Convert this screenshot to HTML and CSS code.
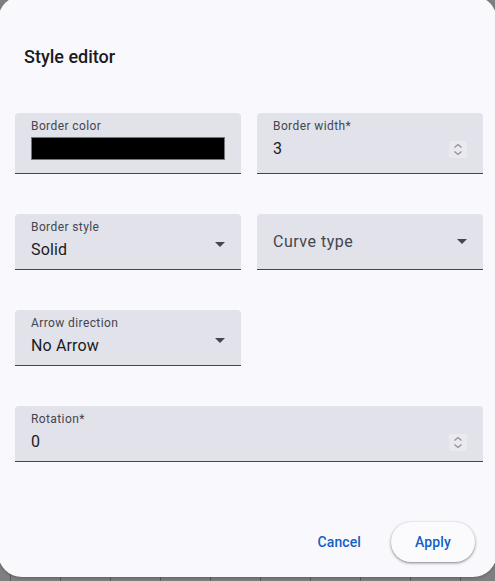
FILE: index.html
```html
<!DOCTYPE html>
<html lang="en">
<head>
<meta charset="utf-8">
<title>Style editor</title>
<link rel="stylesheet" href="styles.css">
</head>
<body>
<div class="backdrop"></div>
<div class="dialog" role="dialog" aria-labelledby="dlg-title">
  <h2 class="title" id="dlg-title">Style editor</h2>
  <div class="grid">
    <div class="field">
      <div class="body">
        <div class="label">Border color</div>
        <div class="swatch"></div>
      </div>
    </div>
    <div class="field">
      <div class="body">
        <div class="label">Border width*</div>
        <div class="value-row">
          <span class="value">3</span>
          <span class="spin"><svg width="18" height="17" viewBox="0 0 18 17"><path d="M5.5 6.5 L9 3.5 L12.5 6.5" fill="none" stroke="#8d8e98" stroke-width="1.2"/><path d="M5.5 10.5 L9 13.5 L12.5 10.5" fill="none" stroke="#8d8e98" stroke-width="1.2"/></svg></span>
        </div>
      </div>
    </div>
    <div class="field">
      <div class="body">
        <div class="label">Border style</div>
        <div class="value">Solid</div>
      </div>
      <span class="arrow"></span>
    </div>
    <div class="field center">
      <div class="body">
        <div class="placeholder">Curve type</div>
      </div>
      <span class="arrow"></span>
    </div>
    <div class="field">
      <div class="body">
        <div class="label">Arrow direction</div>
        <div class="value">No Arrow</div>
      </div>
      <span class="arrow"></span>
    </div>
    <div></div>
    <div class="field wide">
      <div class="body">
        <div class="label">Rotation*</div>
        <div class="value-row">
          <span class="value">0</span>
          <span class="spin"><svg width="18" height="17" viewBox="0 0 18 17"><path d="M5.5 6.5 L9 3.5 L12.5 6.5" fill="none" stroke="#8d8e98" stroke-width="1.2"/><path d="M5.5 10.5 L9 13.5 L12.5 10.5" fill="none" stroke="#8d8e98" stroke-width="1.2"/></svg></span>
        </div>
      </div>
    </div>
  </div>
  <div class="actions">
    <button class="btn text">Cancel</button>
    <button class="btn elevated">Apply</button>
  </div>
</div>
</body>
</html>
```
FILE: styles.css
```css
html, body {
  margin: 0;
  padding: 0;
  width: 495px;
  height: 581px;
  overflow: hidden;
}
body {
  font-family: Roboto, "Noto Sans", "Liberation Sans", sans-serif;
  background: #7e7e7e;
  position: relative;
}
.backdrop {
  position: absolute;
  inset: 0;
  background: repeating-linear-gradient(to right, #7f7f7f 0, #7f7f7f 10px, #5c5c5c 10px, #5c5c5c 11px, #7f7f7f 11px, #7f7f7f 50px);
}
.dialog {
  position: absolute;
  left: -2px;
  top: -4px;
  width: 499px;
  height: 581px;
  box-sizing: border-box;
  background: #f9f8fd;
  border-radius: 24px;
  padding: 49px 14px 15px 17px;
  display: flex;
  flex-direction: column;
  box-shadow: 0 1px 3px rgba(0,0,0,0.25);
}
.title {
  margin: 0 0 0 9px;
  font-size: 18px;
  line-height: 24px;
  font-weight: 500;
  color: #1b1b21;
  letter-spacing: 0;
}
.grid {
  margin-top: 44px;
  display: grid;
  grid-template-columns: 1fr 1fr;
  column-gap: 16px;
  row-gap: 40px;
  grid-auto-rows: 56px;
  grid-template-rows: 61px;
}
.field {
  background: #e1e2ea;
  border-radius: 4px 4px 0 0;
  border-bottom: 1px solid #44464f;
  padding: 5px 16px 0 16px;
  display: flex;
  box-sizing: border-box;
}
.field.wide { grid-column: 1 / 3; }
.field.center { padding-top: 0; align-items: center; }
.body {
  flex: 1;
  display: flex;
  flex-direction: column;
}
.label {
  font-size: 12px;
  line-height: 16px;
  color: #44464f;
  letter-spacing: 0.4px;
  margin-bottom: 3px;
}
.value {
  font-size: 16px;
  line-height: 24px;
  color: #1b1b21;
  letter-spacing: 0.15px;
}
.placeholder {
  font-size: 16px;
  line-height: 24px;
  color: #44464f;
  letter-spacing: 0.5px;
}
.swatch {
  height: 21px;
  width: 192px;
  background: #000;
  border: 1px solid #767676;
}
.value-row {
  display: flex;
  align-items: center;
  justify-content: space-between;
}
.spin {
  width: 18px;
  height: 17px;
  background: #e9e9ef;
  display: block;
  margin-top: 1px;
}
.spin svg { display: block; }
.arrow {
  align-self: center;
  width: 0;
  height: 0;
  border-left: 5px solid transparent;
  border-right: 5px solid transparent;
  border-top: 5px solid #44464f;
  margin-right: 0;
}
.actions {
  margin-top: auto;
  display: flex;
  justify-content: flex-end;
  align-items: center;
  gap: 18px;
  padding-right: 8px;
}
.btn {
  font-family: Roboto, "Noto Sans", "Liberation Sans", sans-serif;
  font-size: 14px;
  font-weight: 500;
  letter-spacing: 0.1px;
  height: 40px;
  border: none;
  border-radius: 20px;
  color: #155fc6;
  background: transparent;
  padding: 0 12px;
  cursor: pointer;
}
.btn.elevated {
  width: 84px;
  padding: 0;
  background: #fbfbfe;
  box-shadow: 0 1px 2px rgba(0,0,0,0.3), 0 1px 3px 1px rgba(0,0,0,0.15);
}
```
